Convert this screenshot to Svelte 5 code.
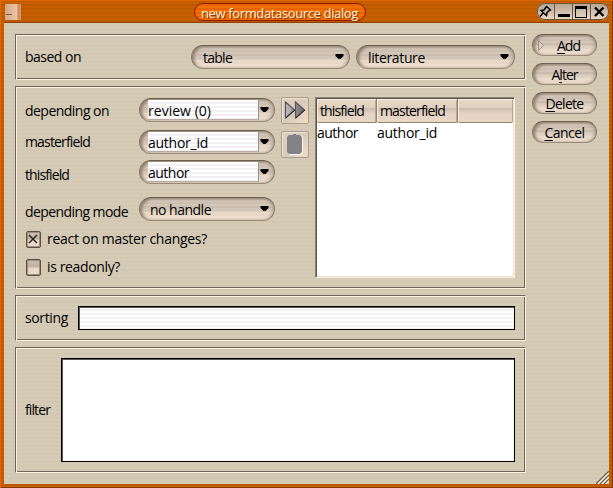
<script>
  const actions = [
    { key: 'A', rest: 'dd', pre: '', w: 23, primary: true },
    { key: 'l', rest: 'ter', pre: 'A', w: 26 },
    { key: 'D', rest: 'elete', pre: '', w: 38 },
    { key: 'C', rest: 'ancel', pre: '', w: 40 }
  ];

  // Spreads the letters of a caption over a given width.
  function fit(node, width) {
    const natural = node.getBoundingClientRect().width;
    const count = node.textContent.length;
    node.style.letterSpacing = (width - natural) / count + 'px';
  }
</script>

{#snippet t(text, w)}<span class="t" use:fit={w}>{text}</span>{/snippet}

{#snippet arrow()}
  <svg class="arrow" width="9" height="6" viewBox="0 0 9 6"><path d="M.5 0H8.500V2L5.500 5H3.500L.5 2Z" fill="#000" /></svg>
{/snippet}

{#snippet select(text, w)}
  <div class="pill select">{@render t(text, w)}{@render arrow()}</div>
{/snippet}

{#snippet combo(text, w)}
  <div class="pill combo"><div class="field">{@render t(text, w)}</div>{@render arrow()}</div>
{/snippet}

<div class="window">
  <header>
    <div class="appicon"><i></i></div>
    <div class="title">{@render t('new formdatasource dialog', 157)}</div>
    <div class="controls">
      <span><svg width="16" height="16" viewBox="0 0 16 16"><path d="M9 3L14 7.500M9.500 3.500L7 7L4 7.500L9.500 12.500L10 9.500L13 7M6 10L3 13.500" fill="none" stroke="#000" stroke-width="1.500" /></svg></span>
      <span><svg width="16" height="16" viewBox="0 0 16 16"><path d="M3 11H15V14H3Z" /></svg></span>
      <span><svg width="16" height="16" viewBox="0 0 16 16"><path d="M2 3H14V15H2ZM3 6V14H13V6Z" fill-rule="evenodd" /></svg></span>
      <span><svg width="16" height="16" viewBox="0 0 16 16"><path d="M4 4.500L12.500 13M12.500 4.500L4 13" stroke="#000" stroke-width="2.400" /></svg></span>
    </div>
  </header>

  <main>
    <div class="groups">
      <section class="based">
        <label>{@render t('based on', 56)}</label>
        {@render select('table', 29)}
        {@render select('literature', 57)}
      </section>

      <section class="depending">
        <div class="left">
          <div class="top">
            <div class="labels">
              <label>{@render t('depending on', 84)}</label>
              <label>{@render t('masterfield', 65)}</label>
              <label>{@render t('thisfield', 44)}</label>
              <label>{@render t('depending mode', 103)}</label>
            </div>
            <div class="combos">
              {@render combo('review (0)', 63)}
              {@render combo('author_id', 60)}
              {@render combo('author', 41)}
              {@render select('no handle', 61)}
            </div>
          </div>
          <div class="check">
            <div class="box"><svg width="15" height="15" viewBox="0 0 15 15"><path d="M3 3L11 11M11 3L3 11" stroke="#2b251f" stroke-width="1.500" /></svg></div>
            {@render t('react on master changes?', 160)}
          </div>
          <div class="check">
            <div class="box"></div>
            {@render t('is readonly?', 73)}
          </div>
        </div>
        <div class="tools">
          <div class="tool">
            <svg width="22" height="20" viewBox="0 0 22 20">
              <defs><linearGradient id="ff"><stop offset="0" stop-color="#c4c0c0" /><stop offset="1" stop-color="#656267" /></linearGradient></defs>
              <path d="M1.500 1V17L10.500 9ZM11.500 1V17L20.500 9Z" fill="url(#ff)" stroke="#565256" stroke-width="1.200" />
              <path d="M2 17L11 9M12 17L21 9" stroke="#221f22" stroke-width="1" />
            </svg>
          </div>
          <div class="tool">
            <svg width="20" height="22" viewBox="0 0 20 22">
              <path d="M5 1H16L18 3V19L16 21H5L3 19V3Z" fill="#fffaf4" />
              <path d="M4 1H8V0H11V1H15L17 3V18L15 20H4L2 18V3Z" fill="#858286" />
            </svg>
          </div>
        </div>
        <div class="list">
          <div class="row head">
            <div>{@render t('thisfield', 44)}</div>
            <div>{@render t('masterfield', 65)}</div>
            <div></div>
          </div>
          <div class="row">
            <div>{@render t('author', 41)}</div>
            <div>{@render t('author_id', 60)}</div>
          </div>
        </div>
      </section>

      <section class="sorting">
        <label>{@render t('sorting', 43)}</label>
        <div class="input striped"></div>
      </section>

      <section class="filter">
        <label>{@render t('filter', 25)}</label>
        <div class="input"></div>
      </section>
    </div>

    <nav>
      {#each actions as a}
        <div class="pill button">
          {#if a.primary}<svg class="mark" width="7" height="11" viewBox="0 0 7 11"><path d="M.5 .5V10.500L5.500 5.500Z" fill="#d9cdbd" stroke="#a1917f" /></svg>{/if}
          <span class="t" use:fit={a.w}>{a.pre}<u>{a.key}</u>{a.rest}</span>
        </div>
      {/each}
    </nav>
    <svg class="grip" width="13" height="13" viewBox="0 0 13 13">
      <path d="M0 13L13 0M4 13L13 4M8 13L13 8" stroke="#5f594e" stroke-width="1.300" />
      <path d="M2 13L13 2M6 13L13 6M10 13L13 10" stroke="#fff0e0" stroke-width="1.200" />
    </svg>
  </main>
</div>

<style>
  .window {
    box-sizing: border-box;
    width: 613px;
    height: 488px;
    display: flex;
    flex-direction: column;
    padding: 0 4px 4px 4px;
    background: repeating-linear-gradient(#bd5900 0 2px, #c96000 2px 4px);
    box-shadow: inset 1px 1px #e66500, inset -1px -1px #853900;
    font: 14px/20px "Open Sans", "Noto Sans", sans-serif;
    color: #000;
    overflow: hidden;
  }
  .t { display: inline-block; white-space: pre; flex: none; }
  header {
    height: 22px;
    flex: none;
    display: flex;
    align-items: flex-start;
    border-bottom: 1px solid #8f4200;
  }
  .appicon {
    width: 16px;
    height: 16px;
    margin: 4px 0 0 1px;
    background: linear-gradient(90deg, #d0a98b, #efc5a2 75%, #c68c61 80%, #d49a70);
  }
  .appicon i { display: block; width: 6px; height: 1px; margin: 10px 0 0 1px; background: #80583d; }
  .title {
    box-sizing: border-box;
    width: 172px;
    height: 18px;
    margin: 3px 0 0 173px;
    border: 1px solid #8f1600;
    border-radius: 9px;
    padding-left: 6px;
    line-height: 18px;
    font-size: 13px;
    color: #ffeedd;
    background: repeating-linear-gradient(#e76500 0 2px, #f36f08 2px 4px);
    text-shadow: 1px 1px #843800;
  }
  .controls {
    box-sizing: border-box;
    width: 72px;
    height: 17px;
    margin: 3px 0 0 auto;
    display: flex;
    border-radius: 8px;
    overflow: hidden;
    background: linear-gradient(#b3a491, #eadaca);
    box-shadow: inset 0 0 0 1px #71543d;
  }
  .controls span { width: 17px; padding-right: 1px; flex: none; box-shadow: inset -1px 0 #71543d; }
  .controls span:last-child { box-shadow: none; }
  .controls svg { display: block; }

  main {
    position: relative;
    flex: 1;
    display: flex;
    align-items: flex-start;
    gap: 6px;
    padding: 11px 12px 0 11px;
    background: repeating-linear-gradient(#d6ccb6 0 2px, #d1c7b1 2px 3px, #d4c8b7 3px 4px);
  }
  .groups { width: 511px; flex: none; display: flex; flex-direction: column; gap: 6px; }
  section {
    position: relative;
    box-sizing: border-box;
    display: flex;
    border: 1px solid #6e665a;
    border-right-color: #fff0df;
    border-bottom-color: #fff0df;
    box-shadow: inset 1px 1px #fff0df, inset -1px -1px #6e665a;
    padding: 11px 10px 0 9px;
  }
  .based { height: 46px; gap: 6px; padding-top: 10px; }
  .based label { flex: 1; padding-top: 2px; }
  .depending { height: 203px; }
  .sorting { height: 46px; padding-top: 10px; }
  .filter { height: 126px; padding-top: 10px; }

  .pill {
    box-sizing: border-box;
    height: 24px;
    display: flex;
    align-items: center;
    border: 1px solid #6a5d4e;
    border-color: #6b5f52 #85786a #978a79;
    border-radius: 12px;
    background: repeating-linear-gradient(transparent 0 2px, #ffffff22 2px 4px),
      linear-gradient(#d0c2b2, #cabcad 50%, #e2d2c1 65%, #f2e0cf);
    box-shadow: inset 2px 1px 3px #8c7c6b, inset -2px 0 3px #a6978499;
  }
  .select { width: 159px; padding: 0 5px 0 11px; justify-content: space-between; }
  .select .t { margin-top: 1px; }
  .combos .select { width: 136px; margin-top: 13px; }
  .combos .select .t { margin-left: -1px; }
  .combo { width: 136px; padding: 0 5px 0 8px; justify-content: space-between; }
  .field {
    box-sizing: border-box;
    width: 111px;
    height: 20px;
    line-height: 21px;
    border-right: 1px solid #9c9187;
    border-bottom: 1px solid #b8aca0;
    background: repeating-linear-gradient(#fff 0 2px, #f3eff3 2px 4px);
  }
  .arrow { flex: none; }

  .left { width: 250px; flex: none; }
  .top { display: flex; }
  .labels { width: 114px; flex: none; display: flex; flex-direction: column; padding-top: 3px; }
  .labels label { height: 20px; }
  .labels label:nth-child(2) { margin-top: 11px; }
  .labels label:nth-child(3) { margin-top: 13px; }
  .labels label:nth-child(4) { margin-top: 17px; }
  .combos { display: flex; flex-direction: column; }
  .combos .combo:nth-child(2) { margin-top: 8px; }
  .combos .combo:nth-child(3) { margin-top: 6px; }
  .check { display: flex; height: 20px; margin: 7px 0 0 1px; gap: 6px; align-items: center; }
  .check + .check { margin-top: 8px; }
  .top { margin-bottom: -1px; }
  .top + .check { margin-top: 8px; }
  .box {
    box-sizing: border-box;
    width: 15px;
    height: 17px;
    border: 1px solid #5c5044;
    border-radius: 2px;
    background: linear-gradient(#d1c3b2, #bdb0a1 48%, #ead9c9 52%);
    box-shadow: inset 1px 1px 1px #998b7b, inset -1px -1px #9d9080;
  }
  .box svg { display: block; margin: 0 0 0 -1px; }
  .tools { display: flex; flex-direction: column; gap: 7px; width: 28px; margin: -1px 0 0 6px; }
  .tool {
    box-sizing: border-box;
    width: 28px;
    height: 27px;
    display: flex;
    align-items: center;
    justify-content: center;
    border: 1px solid #a89d8d;
    border-radius: 2px;
    background: linear-gradient(135deg, #dfd1bf, #d8cab8 50%, #f1decb);
    box-shadow: inset 1px 1px #f1e0cd;
  }
  .list {
    box-sizing: border-box;
    width: 200px;
    height: 181px;
    margin: -1px 0 0 6px;
    background: #fff;
    border: 1px solid #8c8375;
    border-right-color: #fff0df;
    border-bottom-color: #fff0df;
    box-shadow: inset 1px 1px #5b554d, inset -1px -1px #f0dfcc;
    padding: 1px;
  }
  .row { display: flex; line-height: 19px; }
  .row div { width: 60px; flex: none; }
  .head { line-height: 24px; height: 24px; }
  .head div {
    box-sizing: border-box;
    padding-left: 3px;
    border-right: 1px solid #8f8373;
    border-bottom: 1px solid #8f8373;
    border-radius: 0 0 2px 2px;
    box-shadow: inset 1px 1px #faeddd, inset -1px 0 #b5a897;
    background: linear-gradient(#ead8c8, #dfcfbf 38%, #cabcae 40%, #e4d3c3 62%, #e9d7c5);
  }
  .head div:nth-child(2) { width: 81px; }
  .head div:nth-child(3) { width: auto; flex: 1; border-right: 0; }

  .input {
    box-sizing: border-box;
    flex: 1;
    height: 24px;
    border: 1px solid #000;
    background: #fff;
    box-shadow: inset 1px 1px #5b5751, inset -1px -1px #fff0df;
  }
  .striped { background: repeating-linear-gradient(#fff 0 2px, #f3eff3 2px 4px); }
  .sorting label { width: 53px; padding-top: 2px; }
  .filter label { width: 36px; padding-top: 42px; }
  .filter .input { height: 104px; }

  nav { display: flex; flex-direction: column; gap: 7px; width: 65px; }
  .button { position: relative; height: 22px; justify-content: center; border-radius: 11px; }
  .button .t { margin-top: 1px; }
  .button:first-child { padding-left: 8px; }
  .mark { position: absolute; left: 5px; top: 5px; }
  u { text-decoration: underline; text-underline-offset: 2px; text-decoration-thickness: 1px; }
  .grip { position: absolute; right: 0; bottom: 0; }
</style>
